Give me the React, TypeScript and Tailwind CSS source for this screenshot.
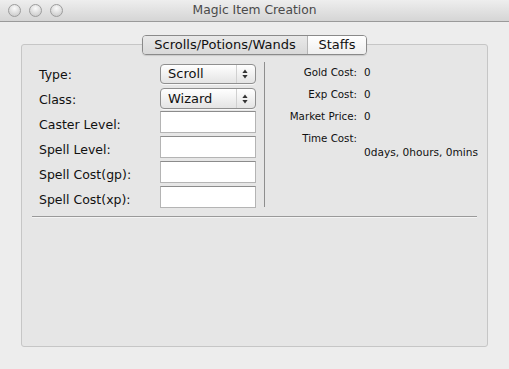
const leftLabels = ['Type:', 'Class:', 'Caster Level:', 'Spell Level:', 'Spell Cost(gp):', 'Spell Cost(xp):'];

const costs = [
  { label: 'Gold Cost:', value: '0' },
  { label: 'Exp Cost:', value: '0' },
  { label: 'Market Price:', value: '0' },
  { label: 'Time Cost:', value: '' },
];

function TrafficLight() {
  return (
    <div className="w-[13px] h-[13px] rounded-full border border-[#9c9c9c] bg-[radial-gradient(circle_at_50%_30%,#fbfbfb_0%,#dcdcdc_55%,#c4c4c4_100%)]" />
  );
}

function Popup({ value, className }: { value: string; className: string }) {
  return (
    <div className={`flex rounded-[4px] border border-[#8f8f8f] bg-gradient-to-b from-[#ffffff] to-[#e4e4e4] shadow-[0_1px_0_#f8f8f8] ${className}`}>
      <div className="flex-1 flex items-center pl-[7px] text-[13px] text-[#111]">{value}</div>
      <div className="w-[19px] flex items-center justify-center pr-[3px] border-l border-[#d0d0d0]">
        <svg width="6" height="10" viewBox="0 0 6 10">
          <path d="M3 0.5 L5.6 4 L0.4 4 Z" fill="#333" />
          <path d="M3 9.5 L5.6 6 L0.4 6 Z" fill="#333" />
        </svg>
      </div>
    </div>
  );
}

function Field({ className }: { className: string }) {
  return (
    <div className={`h-[22px] bg-white border border-[#b4b4b4] border-t-[#8c8c8c] ${className}`} />
  );
}

export default function App() {
  return (
    <div className="w-[509px] h-[369px] flex flex-col bg-[#ededed] font-['DejaVu_Sans','Liberation_Sans',sans-serif] overflow-hidden">
      {/* title bar */}
      <div className="h-[22px] grid grid-cols-[1fr_auto_1fr] items-center border-b border-[#9a9a9a] bg-gradient-to-b from-[#eeeeee] to-[#d5d5d5]">
        <div className="flex items-center gap-[8px] pl-[8px]">
          <TrafficLight />
          <TrafficLight />
          <TrafficLight />
        </div>
        <div className="text-[12.3px] text-[#4a4a4a] leading-none">Magic Item Creation</div>
        <div />
      </div>

      <div className="flex-1 flex flex-col px-[21px]">
        {/* tabs */}
        <div className="relative z-10 mt-[13px] self-center flex h-[20px] rounded-[4px] border border-[#8a8a8a] overflow-hidden shadow-[0_1px_1px_rgba(0,0,0,0.12)] text-[13px] text-[#111]">
          <div className="w-[165px] flex items-center justify-center bg-gradient-to-b from-[#e9e9e9] to-[#d9d9d9] border-r border-[#b5b5b5]">
            Scrolls/Potions/Wands
          </div>
          <div className="w-[58px] flex items-center justify-center bg-gradient-to-b from-[#ffffff] to-[#efefef]">
            Staffs
          </div>
        </div>

        {/* group box */}
        <div className="-mt-[11px] h-[303px] rounded-[3px] border border-[#c6c6c6] bg-[#e6e6e6] flex flex-col">
          <div className="flex pt-[17px] pl-[17px]">
            <div className="w-[121px] flex flex-col text-[12.5px] text-[#111]">
              {leftLabels.map((l) => (
                <div key={l} className="h-[25px] flex items-center pt-[1px]">{l}</div>
              ))}
            </div>

            <div className="w-[96px] flex flex-col pt-[2px]">
              <Popup value="Scroll" className="h-[20px]" />
              <Popup value="Wizard" className="h-[21px] mt-[4px]" />
              <Field className="mt-[2px]" />
              <Field className="mt-[3px]" />
              <Field className="mt-[3px]" />
              <Field className="mt-[3px]" />
            </div>

            <div className="ml-[8px] w-px h-[145px] bg-[#8e8e8e]" />

            <div className="grid grid-cols-[92px_auto] gap-x-[7px] content-start text-[10.3px] text-[#111]">
              {costs.map((c) => (
                <div key={c.label} className="contents">
                  <div className="h-[22px] flex items-center justify-end">{c.label}</div>
                  <div className="h-[22px] flex items-center">{c.value}</div>
                </div>
              ))}
              <div className="col-start-2 -mt-[5px] leading-[14px] text-[10.6px] whitespace-nowrap">0days, 0hours, 0mins</div>
            </div>
          </div>

          <div className="mt-[4px] mx-[10px] h-px bg-[#9a9a9a] shadow-[0_1px_0_#f4f4f4]" />
        </div>
      </div>
    </div>
  );
}
